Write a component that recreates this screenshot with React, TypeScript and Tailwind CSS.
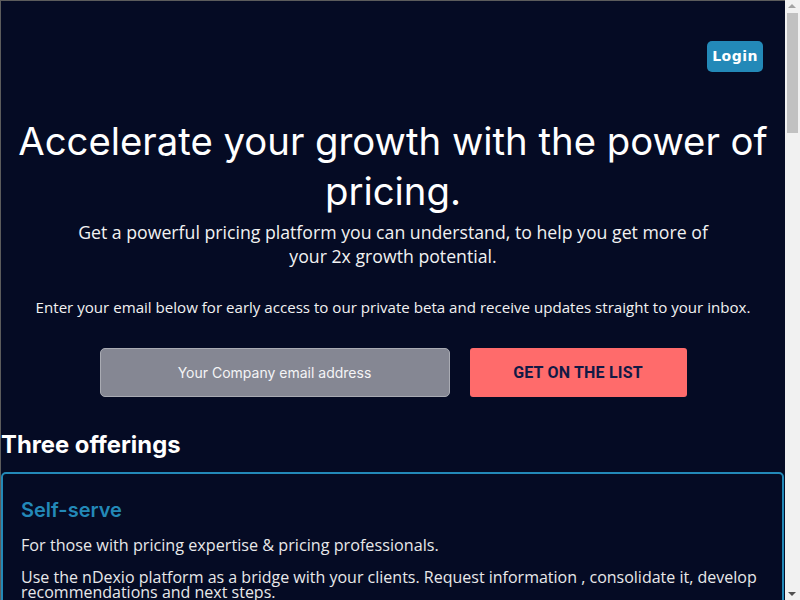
import React from "react";

const body = { fontFamily: '"Open Sans", "Liberation Sans", sans-serif' };
const inter = { fontFamily: 'Inter, sans-serif' };

function ScrollbarStrip() {
  return (
    <div className="scheme-only-light relative w-[15px] shrink-0 h-screen border-l-[15px] border-l-[#f1f1f1]">
      <div className="absolute left-[-12px] top-[4px] w-0 h-0 border-l-[4px] border-r-[4px] border-b-[4px] border-l-transparent border-r-transparent border-b-[#a3a3a3]" />
      <div className="absolute left-[-13px] top-[13px] w-0 h-[120px] border-l-[11px] border-l-[#c1c1c1]" />
      <div className="absolute left-[-12px] bottom-[4px] w-0 h-0 border-l-[4px] border-r-[4px] border-t-[4px] border-l-transparent border-r-transparent border-t-[#505050]" />
    </div>
  );
}

export default function App() {
  return (
    <div className="scheme-only-light flex h-screen w-full overflow-hidden">
      <div className="w-[785px] shrink-0 h-full overflow-hidden bg-[#050b24] border-l border-t border-[#5c5c5c] text-white" style={body}>
        <div className="flex justify-end pt-[40px] pr-[22px]">
          <button className="h-[31px] px-[5px] rounded-[5px] bg-[#2389b8] text-white text-[14px] font-bold tracking-[0.5px]" style={{ fontFamily: '"DejaVu Sans", sans-serif' }}>
            Login
          </button>
        </div>
        <div className="flex flex-col items-center text-center mt-[44px]">
          <h1 className="text-[38.3px] leading-[50px] font-normal" style={inter}>
            Accelerate your growth with the power of pricing.
          </h1>
          <p className="mt-[4px] text-[17.7px] leading-[24px] max-w-[650px] text-[#f2f2f2]">
            Get a powerful pricing platform you can understand, to help you get more of your 2x growth potential.
          </p>
          <p className="mt-[27px] text-[15.1px] leading-[24px] text-[#f2f2f2]">
            Enter your email below for early access to our private beta and receive updates straight to your inbox.
          </p>
          <div className="mt-[29px] flex gap-[20px]">
            <div className="w-[350px] h-[49px] rounded-[5px] bg-[#858793] border border-[#a9abb3] flex items-center justify-center text-[14px] text-[#f4f4f6]" style={inter}>
              Your Company email address
            </div>
            <button className="w-[217px] h-[49px] rounded-[3px] bg-[#ff6b6b] text-[#121a45] text-[16px] font-bold tracking-[0.2px]" style={{ fontFamily: 'Roboto, sans-serif' }}>
              GET ON THE LIST
            </button>
          </div>
        </div>
        <h2 className="mt-[32px] text-[23.8px] leading-[32px] font-bold" style={inter}>
          Three offerings
        </h2>
        <div className="mt-[11px] mr-[1px] flex flex-col gap-6">
          <div className="border-2 border-[#2389b8] rounded-[5px] px-[18px] pt-[23px] pb-[20px]">
            <h3 className="text-[20px] leading-[26px] font-semibold text-[#2389b8]" style={inter}>Self-serve</h3>
            <p className="mt-[12px] text-[16.2px] leading-[20px] text-[#e8e8ea]">For those with pricing expertise &amp; pricing professionals.</p>
            <p className="mt-[15px] text-[16px] leading-[15px] text-[#e8e8ea]">
              Use the nDexio platform as a bridge with your clients. Request information , consolidate it, develop recommendations and next steps.
            </p>
          </div>
          <div className="border-2 border-[#2389b8] rounded-[5px] px-[18px] pt-[23px] pb-[20px]">
            <h3 className="text-[20px] leading-[26px] font-semibold text-[#2389b8]" style={inter}>Guided</h3>
            <p className="mt-[13px] text-[16px] leading-[20px] text-[#e8e8ea]">For teams who want support from pricing experts.</p>
          </div>
        </div>
      </div>
      <ScrollbarStrip />
    </div>
  );
}
